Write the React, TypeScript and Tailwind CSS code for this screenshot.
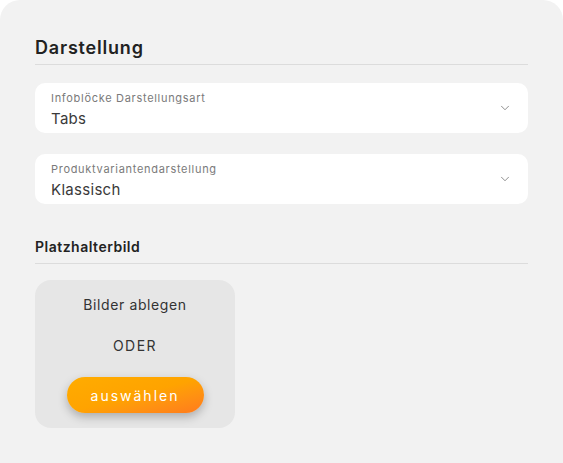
import { ChevronDown } from 'lucide-react';

const selects = [
  { label: 'Infoblöcke Darstellungsart', value: 'Tabs' },
  { label: 'Produktvariantendarstellung', value: 'Klassisch' },
];

function SelectField({ label, value }: { label: string; value: string }) {
  return (
    <div className="flex h-[50px] items-center justify-between rounded-[10px] bg-white pl-4 pr-4">
      <div className="flex flex-col pt-[2px]">
        <span className="text-[11px] leading-[14px] tracking-[0.7px] text-[#7a7a7a]">{label}</span>
        <span className="mt-[4px] text-[15px] leading-[19px] tracking-[0.3px] text-[#3a3a3a]">{value}</span>
      </div>
      <ChevronDown className="h-[14px] w-[14px] text-[#666]" strokeWidth={1.25} />
    </div>
  );
}

export default function App() {
  return (
    <div className="h-[463px] w-[563px] bg-white font-['Inter',sans-serif]">
      <div className="h-full rounded-t-[20px] bg-[#f2f2f2] px-[35px] pt-[36px]">
        <h2 className="border-b border-[#dcdcdc] pb-[5px] text-[18px] font-semibold leading-[23px] tracking-[0.8px] text-[#222]">
          Darstellung
        </h2>

        <div className="mt-[18px] flex flex-col gap-[21px]">
          {selects.map((s) => (
            <SelectField key={s.label} label={s.label} value={s.value} />
          ))}
        </div>

        <h3 className="mt-[34px] border-b border-[#dcdcdc] pb-[7px] text-[14px] font-semibold leading-[18px] tracking-[0.5px] text-[#222]">
          Platzhalterbild
        </h3>

        <div className="mt-[16px] flex h-[148px] w-[200px] flex-col items-center rounded-[16px] bg-[#e6e6e6] pt-[16px]">
          <p className="text-[14px] leading-[18px] tracking-[0.6px] text-[#333]">Bilder ablegen</p>
          <p className="mt-[23px] text-[14px] leading-[18px] tracking-[1.5px] text-[#333]">ODER</p>
          <button className="mt-[22px] h-[36px] w-[137px] rounded-full bg-gradient-to-br from-[#ffac00] via-[#ffa300] to-[#ff7a1c] text-[14px] tracking-[2px] text-white shadow-[0_4px_10px_rgba(0,0,0,0.25)]">
            auswählen
          </button>
        </div>
      </div>
    </div>
  );
}
